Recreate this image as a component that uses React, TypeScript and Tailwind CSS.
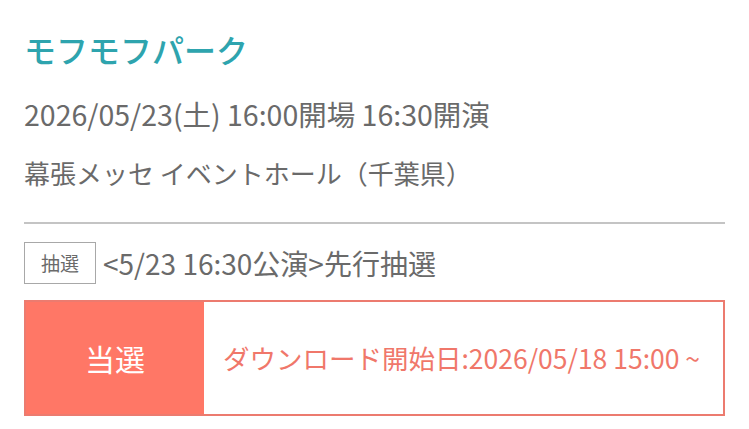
import React from 'react';

export default function App() {
  return (
    <div
      className="w-[749px] h-[429px] bg-white px-6 pt-[30px]"
      style={{ fontFamily: '"Noto Sans CJK JP", "Noto Sans", sans-serif' }}
    >
      <h1 className="text-[32px] font-medium leading-[38px] text-[#2ea4ae]">モフモフパーク</h1>
      <p className="mt-[28px] text-[28.5px] leading-[36px] text-[#6a6a6a]">
        2026/05/23(土) 16:00開場 16:30開演
      </p>
      <p className="mt-[23px] text-[26px] leading-[36px] text-[#6a6a6a]">
        幕張メッセ イベントホール（千葉県）
      </p>

      <div className="mt-[31px] h-[2px] bg-[#c4c4c4]" />

      <div className="mt-[18px] flex items-center gap-[7px]">
        <span className="flex h-[42px] w-[72px] items-center justify-center border border-[#a8a8a8] text-[19px] text-[#6a6a6a]">
          抽選
        </span>
        <span className="text-[28px] leading-[36px] text-[#6a6a6a]">&lt;5/23 16:30公演&gt;先行抽選</span>
      </div>

      <div className="mt-[16px] flex h-[116px] border-2 border-[#ec7b6f]">
        <div className="flex w-[178px] items-center justify-center bg-[#ff7766] text-[30px] text-white">
          当選
        </div>
        <div className="flex flex-1 items-center pl-[19px] text-[26.5px] text-[#f0776a]">
          ダウンロード開始日:2026/05/18 15:00 ~
        </div>
      </div>
    </div>
  );
}
